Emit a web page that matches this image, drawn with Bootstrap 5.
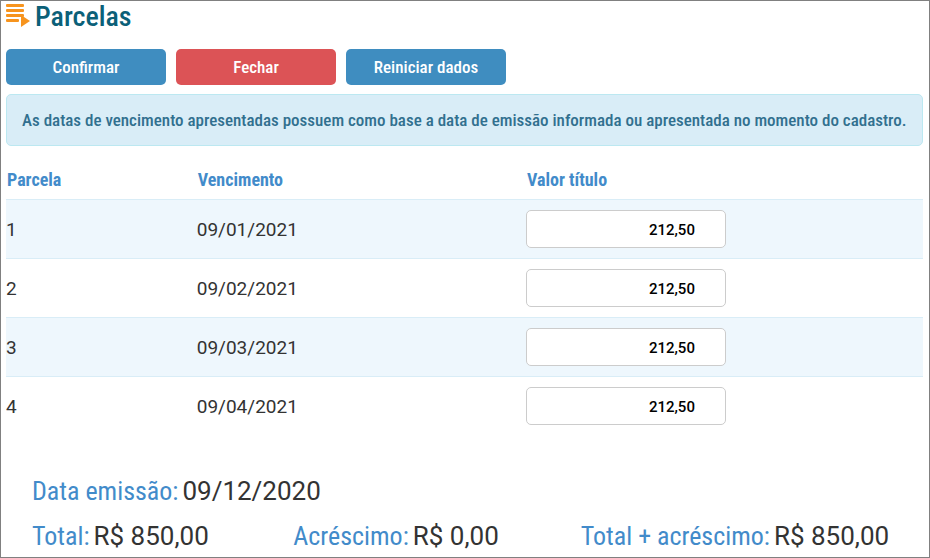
<!DOCTYPE html>
<html lang="pt-BR">
<head>
<meta charset="utf-8">
<meta name="viewport" content="width=device-width, initial-scale=1">
<title>Parcelas</title>
<link href="https://cdn.jsdelivr.net/npm/bootstrap@5.3.0/dist/css/bootstrap.min.css" rel="stylesheet">
<script src="https://cdn.jsdelivr.net/npm/bootstrap@5.3.0/dist/js/bootstrap.bundle.min.js" defer></script>
<style>
  body { font-family: "Roboto Condensed", Roboto, sans-serif; color: #333; background: #fff; }
  .page-frame { min-height: 100vh; border: 1px solid #808080; padding: 0 6px 0 5px; }
  .page-title { font-size: 28px; line-height: 32px; color: #0b6078; font-weight: 500; }
  .title-icon { width: 25px; height: 24px; margin-top: 3px; }
  .actions { gap: 10px; margin-top: 16px; margin-bottom: 9px; }
  .action { width: 160px; height: 36px; padding: 2px 0 0; border: 0; border-radius: 5px; font-size: 17px; font-weight: 500; color: #fff; }
  .action-blue, .action-blue:hover { background: #3f8dc0; color: #fff; }
  .action-red, .action-red:hover { background: #dc5356; color: #fff; }
  .notice { padding: 13px 15px; border: 1px solid #bce8f1; border-radius: 5px; background: #d9edf7; color: #31708f; font-size: 17px; line-height: 24px; font-weight: 500; }
  .installments { table-layout: fixed; font-size: 19px; line-height: 38px; }
  .installments th { height: 53px; padding: 12px 1px 0; border: 0; color: #428bca; font-size: 18px; font-weight: 700; }
  .installments td { padding: 11px 0 9px; border: 0; border-top: 1px solid #d9edf7; color: #333; font-family: Roboto, sans-serif; }
  .installments td:last-child { padding: 10px 0; }
  .installments tbody tr:nth-child(odd) td { background: #eef7fd; }
  .col-number { width: 20.8%; }
  .col-due { width: 35.9%; }
  .amount { width: 200px; height: 38px; padding: 2px 30px 0; border: 1px solid #ccc; border-radius: 5px; font: 500 15px Roboto, sans-serif; color: #000; text-align: right; }
  .totals { row-gap: 7px; font-size: 26px; line-height: 38px; padding: 37px 20px 0 26px; }
  .totals dt { font-weight: 400; color: #428bca; }
  .totals dd { margin: 0; font-family: Roboto, sans-serif; }
  .pair { display: flex; gap: 4px; white-space: nowrap; }
  .totals-row { display: grid; grid-template-columns: 30% 33% auto; }
</style>
</head>
<body>
<main class="page-frame">
  <header class="d-flex align-items-start">
    <svg class="title-icon" viewBox="0 0 25 24" fill="#f7941e" aria-hidden="true">
      <rect y="0" width="18" height="3" rx="1"/><rect y="5" width="18" height="3" rx="1"/><rect y="10" width="18" height="3" rx="1"/><rect y="15" width="13" height="3" rx="1"/>
      <path d="M15 11l9 6-9 6z"/>
    </svg>
    <h1 class="page-title mb-0 ms-1">Parcelas</h1>
  </header>
  <div class="actions d-flex flex-wrap">
    <button type="button" class="btn action action-blue">Confirmar</button>
    <button type="button" class="btn action action-red">Fechar</button>
    <button type="button" class="btn action action-blue">Reiniciar dados</button>
  </div>
  <div class="notice" role="note">As datas de vencimento apresentadas possuem como base a data de emissão informada ou apresentada no momento do cadastro.</div>
  <table class="table installments mb-0 align-middle">
    <colgroup><col class="col-number"><col class="col-due"><col></colgroup>
    <thead><tr><th scope="col">Parcela</th><th scope="col">Vencimento</th><th scope="col">Valor título</th></tr></thead>
    <tbody>
      <tr><td>1</td><td>09/01/2021</td><td><input class="amount d-block" type="text" value="212,50" aria-label="Valor título, parcela 1"></td></tr>
      <tr><td>2</td><td>09/02/2021</td><td><input class="amount d-block" type="text" value="212,50" aria-label="Valor título, parcela 2"></td></tr>
      <tr><td>3</td><td>09/03/2021</td><td><input class="amount d-block" type="text" value="212,50" aria-label="Valor título, parcela 3"></td></tr>
      <tr><td>4</td><td>09/04/2021</td><td><input class="amount d-block" type="text" value="212,50" aria-label="Valor título, parcela 4"></td></tr>
    </tbody>
  </table>
  <dl class="totals d-grid mb-0">
    <div class="pair"><dt>Data emissão:</dt><dd>09/12/2020</dd></div>
    <div class="totals-row">
      <div class="pair"><dt>Total:</dt><dd>R$ 850,00</dd></div>
      <div class="pair"><dt>Acréscimo:</dt><dd>R$ 0,00</dd></div>
      <div class="pair"><dt>Total + acréscimo:</dt><dd>R$ 850,00</dd></div>
    </div>
  </dl>
</main>
</body>
</html>
